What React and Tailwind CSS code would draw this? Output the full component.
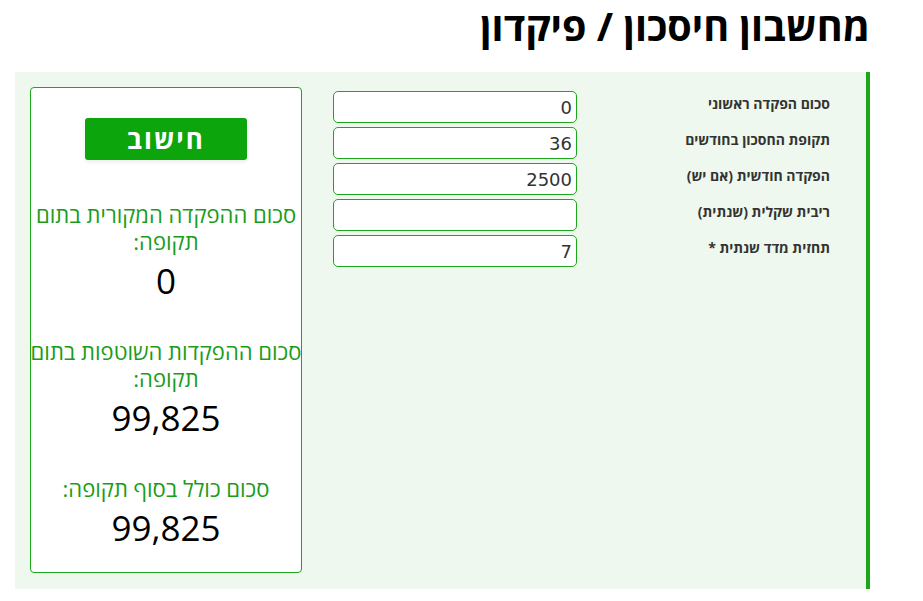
import React from "react";

const rows = [
  { label: "סכום הפקדה ראשוני", value: "0" },
  { label: "תקופת החסכון בחודשים", value: "36" },
  { label: "הפקדה חודשית (אם יש)", value: "2500" },
  { label: "ריבית שקלית (שנתית)", value: "" },
  { label: "תחזית מדד שנתית *", value: "7" },
];

const results = [
  { lines: ["סכום ההפקדה המקורית בתום", "תקופה:"], value: "0" },
  { lines: ["סכום ההפקדות השוטפות בתום", "תקופה:"], value: "99,825" },
  { lines: ["סכום כולל בסוף תקופה:"], value: "99,825" },
];

export default function App() {
  return (
    <div
      dir="rtl"
      className="w-[923px] h-[601px] bg-white overflow-hidden"
      style={{ fontFamily: '"Open Sans", "DejaVu Sans", sans-serif' }}
    >
      <div className="h-[72px] pr-[53px] pt-[1px]">
        <h1 className="text-[39.5px] leading-[50px] font-bold text-black">
          מחשבון חיסכון / פיקדון
        </h1>
      </div>
      <div className="mr-[53px] ml-[15px] bg-[#eef8ee] border-r-4 border-[#1aa81a] flex items-start justify-between pr-[36px] pl-[15px] pt-[15px] pb-[16px]">
        <div className="mt-[4px] flex flex-col gap-[4px]">
          {rows.map((r) => (
            <div key={r.label} className="flex items-start">
              <div className="w-[253px] mt-[3px] text-[14px] leading-[20px] font-bold text-[#333]">{r.label}</div>
              <input
                readOnly
                value={r.value}
                dir="rtl"
                className="w-[244px] h-[32px] bg-white border border-[#1aa81a] rounded-[5px] text-right px-[4px] text-[18px] text-[#333] outline-none"
                style={{ fontFamily: '"DejaVu Sans", sans-serif' }}
              />
            </div>
          ))}
        </div>
        <div className="w-[272px] h-[486px] bg-white border border-[#1aa81a] rounded-[4px] flex flex-col items-center pt-[30px]">
          <button className="w-[162px] h-[42px] bg-[#0ca50c] rounded-[3px] text-white text-[26px] tracking-[2px] font-bold leading-none shadow-[0_2px_4px_rgba(0,0,0,0.08)]">
            חישוב
          </button>
          <div className="mt-[41px] flex flex-col items-center gap-[33px] w-full">
            {results.map((r, i) => (
              <div key={i} className="flex flex-col items-center w-full text-center">
                <div className="text-[22px] leading-[27px] text-[#1a9c1a] whitespace-nowrap">
                  {r.lines.map((l, j) => (
                    <div key={j}>{l}</div>
                  ))}
                </div>
                <div className="text-[35px] leading-[49px] text-black mt-[1px]">{r.value}</div>
              </div>
            ))}
          </div>
        </div>
      </div>
    </div>
  );
}
